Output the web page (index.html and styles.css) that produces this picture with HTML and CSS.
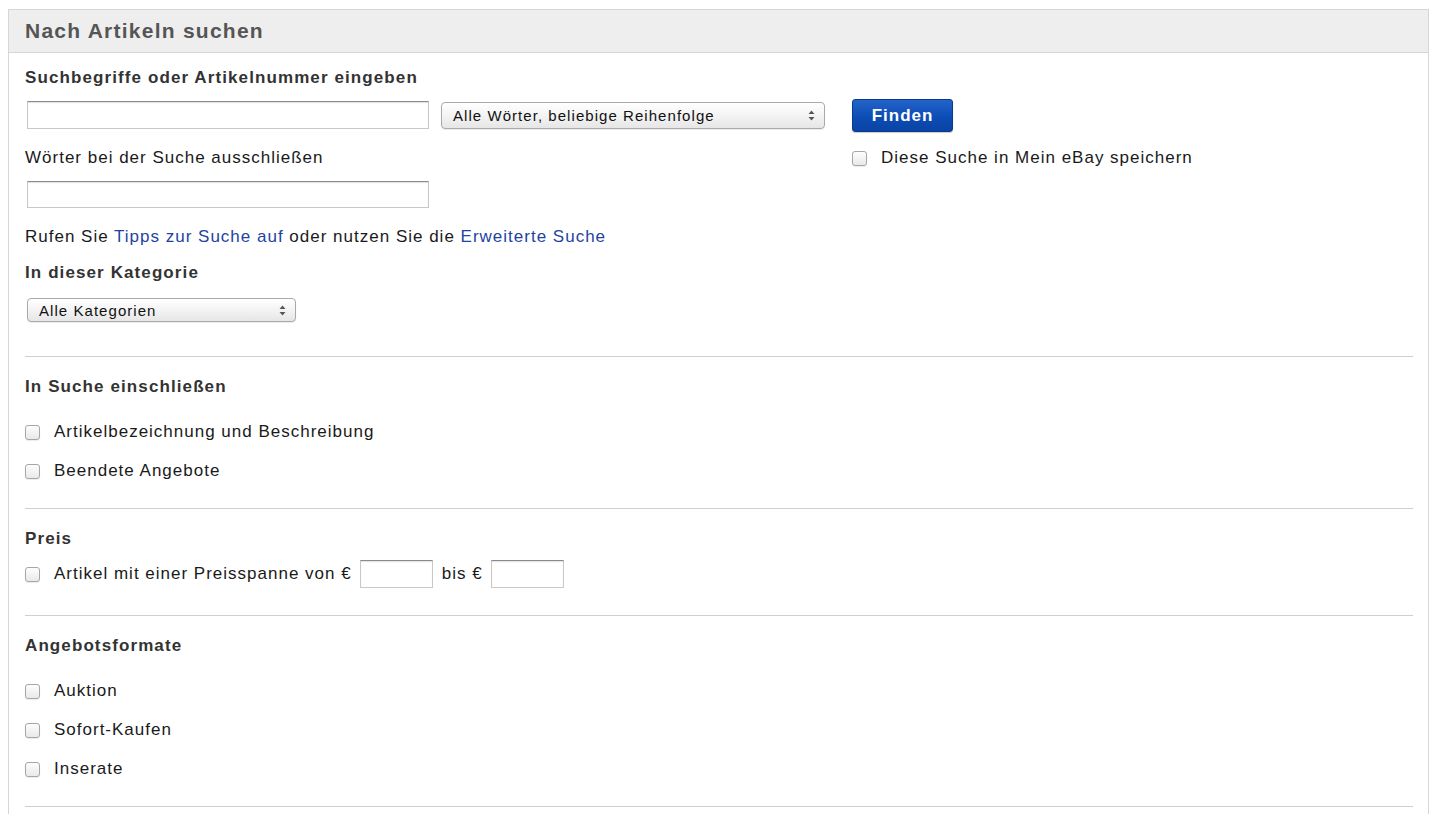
FILE: index.html
```html
<!DOCTYPE html>
<html lang="de">
<head>
<meta charset="utf-8">
<title>Nach Artikeln suchen</title>
<link rel="stylesheet" href="styles.css">
</head>
<body>
<div class="box">
  <div class="box-head">Nach Artikeln suchen</div>
  <div class="box-body">
    <div class="label bold first">Suchbegriffe oder Artikelnummer eingeben</div>
    <div class="search-row">
      <div class="col-left">
        <input class="text text-main" type="text">
        <div class="label sub">Wörter bei der Suche ausschließen</div>
        <input class="text text-exclude" type="text">
      </div>
      <div class="select select-words">
        <span>Alle Wörter, beliebige Reihenfolge</span>
        <svg class="arrows" width="7" height="11" viewBox="0 0 7 11"><path d="M3.5 0.5 L6.5 4 H0.5 Z M3.5 10.5 L0.5 7 H6.5 Z" fill="#555"/></svg>
      </div>
      <div class="col-right">
        <button class="btn" type="button">Finden</button>
        <label class="check-line save"><input type="checkbox" class="cb"><span>Diese Suche in Mein eBay speichern</span></label>
      </div>
    </div>
    <div class="label tips">Rufen Sie <a href="#">Tipps zur Suche auf</a> oder nutzen Sie die <a href="#">Erweiterte Suche</a></div>
    <div class="label bold cat-label">In dieser Kategorie</div>
    <div class="select select-cat">
      <span>Alle Kategorien</span>
      <svg class="arrows" width="7" height="11" viewBox="0 0 7 11"><path d="M3.5 0.5 L6.5 4 H0.5 Z M3.5 10.5 L0.5 7 H6.5 Z" fill="#555"/></svg>
    </div>
    <hr class="sep sep-1">

    <div class="label bold sec-head">In Suche einschließen</div>
    <label class="check-line opt-first"><input type="checkbox" class="cb"><span>Artikelbezeichnung und Beschreibung</span></label>
    <label class="check-line opt"><input type="checkbox" class="cb"><span>Beendete Angebote</span></label>
    <hr class="sep">

    <div class="label bold sec-head">Preis</div>
    <div class="price-row">
      <input type="checkbox" class="cb">
      <span class="price-text">Artikel mit einer Preisspanne von €</span>
      <input class="text price" type="text">
      <span class="price-bis">bis €</span>
      <input class="text price" type="text">
    </div>
    <hr class="sep">

    <div class="label bold sec-head">Angebotsformate</div>
    <label class="check-line opt-first"><input type="checkbox" class="cb"><span>Auktion</span></label>
    <label class="check-line opt"><input type="checkbox" class="cb"><span>Sofort-Kaufen</span></label>
    <label class="check-line opt"><input type="checkbox" class="cb"><span>Inserate</span></label>
    <hr class="sep">
  </div>
</div>
</body>
</html>
```
FILE: styles.css
```css
html, body {
  margin: 0;
  padding: 0;
  background: #fff;
}
body {
  font-family: "Liberation Sans", Arial, sans-serif;
  color: #1a1a1a;
  font-size: 17px;
  letter-spacing: 1px;
}
.box {
  margin: 9px 0 0 8px;
  width: 1419px;
  min-height: 820px;
  border: 1px solid #d6d6d6;
  border-bottom: none;
}
.box-head {
  height: 42px;
  line-height: 42px;
  background: #eeeeee;
  border-bottom: 1px solid #d6d6d6;
  padding-left: 16px;
  font-size: 21px;
  font-weight: bold;
  color: #555;
  letter-spacing: 1.25px;
}
.box-body {
  padding: 0 15px 0 16px;
}
.label {
  line-height: 20px;
  height: 20px;
  white-space: nowrap;
}
.bold {
  font-weight: bold;
  color: #333;
  letter-spacing: 1.1px;
}
.first { margin-top: 15px; }
.search-row {
  display: flex;
  align-items: flex-start;
  margin-top: 11px;
}
.col-left {
  display: flex;
  flex-direction: column;
  width: 402px;
  margin-left: 2px;
}
.text {
  box-sizing: border-box;
  border: 1px solid #c8c8c8;
  border-top-color: #8a8a8a;
  box-shadow: inset 0 1px 1px rgba(0,0,0,0.12);
  background: #fff;
  padding: 0 4px;
  font: inherit;
  margin: 0;
}
.text-main { height: 28px; margin-top: 2px; width: 402px; }
.sub { margin-top: 19px; margin-left: -2px; }
.text-exclude { height: 27px; margin-top: 13px; width: 402px; }
.select {
  box-sizing: border-box;
  display: flex;
  align-items: center;
  justify-content: space-between;
  border: 1px solid #a9a9a9;
  border-radius: 4px;
  background: linear-gradient(#ffffff, #f1f1f1 60%, #e6e6e6);
  box-shadow: 0 1px 1px rgba(0,0,0,0.08);
  font-size: 15px;
  letter-spacing: 1.05px;
  color: #111;
  padding: 0 9px 0 11px;
}
.select-words {
  width: 384px;
  height: 27px;
  margin-left: 12px;
  margin-top: 3px;
}
.select-cat {
  width: 269px;
  height: 24px;
  margin-left: 2px;
  margin-top: 15px;
  padding-left: 11px;
}
.arrows { flex: none; }
.col-right {
  display: flex;
  flex-direction: column;
  align-items: flex-start;
  margin-left: 27px;
}
.btn {
  box-sizing: border-box;
  width: 101px;
  height: 33px;
  border: 1px solid #0a3a8c;
  border-radius: 3px;
  background: linear-gradient(#2463c9, #0c4db6 55%, #0a43a3);
  color: #fff;
  font-family: "Liberation Sans", Arial, sans-serif;
  font-size: 17px;
  font-weight: bold;
  letter-spacing: 1px;
  padding: 0;
  box-shadow: 0 1px 1px rgba(0,0,0,0.2);
}
.check-line {
  display: flex;
  align-items: center;
  height: 20px;
  line-height: 20px;
  white-space: nowrap;
}
.save { margin-top: 16px; }
.cb {
  -webkit-appearance: none;
  appearance: none;
  box-sizing: border-box;
  width: 15px;
  height: 15px;
  margin: 0 14px 0 0;
  border: 1px solid #a6a6a6;
  border-radius: 3px;
  background: linear-gradient(#fdfdfd, #e9e9e9);
  box-shadow: 0 1px 1px rgba(0,0,0,0.08);
  flex: none;
}
.tips { margin-top: 19px; }
.tips a {
  color: #1f43a2;
  text-decoration: none;
}
.cat-label { margin-top: 16px; }
.sep {
  border: none;
  border-top: 1px solid #cfcfcf;
  height: 0;
  margin: 27px 0 0 0;
}
.sep-1 { margin-top: 34px; }
.sec-head { margin-top: 20px; }
.opt-first { margin-top: 25px; }
.opt { margin-top: 19px; }
.price-row {
  display: flex;
  align-items: center;
  height: 28px;
  margin-top: 11px;
  white-space: nowrap;
}
.price {
  width: 73px;
  height: 28px;
}
.price-text { margin-right: 8px; }
.price-bis { margin: 0 8px 0 9px; }
```
